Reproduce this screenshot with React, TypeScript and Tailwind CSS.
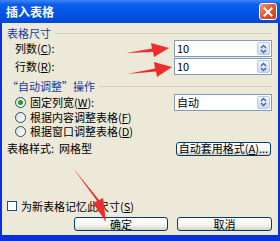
import React from "react";

const font = { fontFamily: '"Noto Sans CJK SC", "Liberation Sans", sans-serif' };

function Spinner() {
  return (
    <div className="flex h-[13px] w-[13px] flex-col items-center justify-center rounded-[2px] border border-[#B8CBEF] bg-[linear-gradient(180deg,#F0F5FF_0%,#C6D8FA_100%)]">
      <svg width="7" height="10" viewBox="0 0 7 10">
        <path d="M1 4 L3.5 1.5 L6 4" fill="none" stroke="#4D6185" strokeWidth="1.3" />
        <path d="M1 6 L3.5 8.5 L6 6" fill="none" stroke="#4D6185" strokeWidth="1.3" />
      </svg>
    </div>
  );
}

function Field({ value }: { value: string }) {
  return (
    <div className="flex h-[17px] w-[98px] items-center justify-between border border-[#7F9DB9] bg-white pl-[2px] pr-[1px]">
      <span className="block text-[11px] leading-[11px] text-black">{value}</span>
      <Spinner />
    </div>
  );
}

function Radio({ checked }: { checked?: boolean }) {
  return (
    <div className="flex h-[11px] w-[11px] items-center justify-center rounded-full border border-[#1C5180] bg-[linear-gradient(135deg,#DCDCD7_0%,#FFFFFF_100%)]">
      {checked && <div className="h-[5px] w-[5px] rounded-full bg-[#21A121]" />}
    </div>
  );
}

function XPButton({ children, className }: { children: React.ReactNode; className?: string }) {
  return (
    <div
      className={
        "flex items-center justify-center rounded-[3px] border border-[#003C74] bg-[linear-gradient(180deg,#FFFFFF_0%,#F4F4F0_60%,#D6D0C5_100%)] text-[11px] leading-[11px] text-black " +
        (className ?? "")
      }
    >
      <span className="block leading-[11px]">{children}</span>
    </div>
  );
}

function Label({ children, className }: { children: React.ReactNode; className?: string }) {
  return <span className={"block leading-[11px] " + (className ?? "")}>{children}</span>;
}

export default function App() {
  return (
    <div className="relative h-[241px] w-[280px] overflow-hidden bg-[#0831D9]" style={font}>
      {/* Title bar */}
      <div className="flex h-[23px] items-center justify-between bg-[linear-gradient(180deg,#3D86F2_0%,#0A5CEC_20%,#0055E5_60%,#0049D2_100%)] pl-[6px] pr-[3px]">
        <span className="block text-[12px] font-bold leading-[12px] text-white">插入表格</span>
        <div className="flex h-[17px] w-[18px] items-center justify-center rounded-[3px] border border-white bg-[linear-gradient(135deg,#F0967A_0%,#E2582F_50%,#C8401A_100%)]">
          <svg width="10" height="10" viewBox="0 0 10 10">
            <path d="M1.5 1.5 L8.5 8.5 M8.5 1.5 L1.5 8.5" stroke="white" strokeWidth="2" strokeLinecap="square" />
          </svg>
        </div>
      </div>

      {/* Body */}
      <div className="mx-[2px] mb-[5px] flex h-[212px] flex-col bg-[#ECE9D8] pl-[5px] pr-[6px] text-[11px] leading-[11px] text-black">
        {/* Group header 1 */}
        <div className="mt-[3px] flex h-[14px] items-center gap-[4px]">
          <Label className="text-[#1A3C9E]">表格尺寸</Label>
          <div className="h-px flex-1 bg-[#D0D0BF]" />
        </div>
        <div className="flex h-[17px] items-center justify-between pl-[8px]">
          <Label>
            列数(<u>C</u>):
          </Label>
          <Field value="10" />
        </div>
        <div className="mt-[1px] flex h-[17px] items-center justify-between pl-[8px]">
          <Label>
            行数(<u>R</u>):
          </Label>
          <Field value="10" />
        </div>

        {/* Group header 2 */}
        <div className="mt-[4px] flex h-[14px] items-center gap-[4px]">
          <Label className="text-[#1A3C9E]">“自动调整”操作</Label>
          <div className="h-px flex-1 bg-[#D0D0BF]" />
        </div>
        <div className="mt-[1px] flex h-[16px] items-center justify-between pl-[8px]">
          <div className="flex items-center gap-[4px]">
            <Radio checked />
            <Label>
              固定列宽(<u>W</u>):
            </Label>
          </div>
          <Field value="自动" />
        </div>
        <div className="flex h-[14px] items-center gap-[4px] pl-[8px]">
          <Radio />
          <Label>
            根据内容调整表格(<u>F</u>)
          </Label>
        </div>
        <div className="flex h-[14px] items-center gap-[4px] pl-[8px]">
          <Radio />
          <Label>
            根据窗口调整表格(<u>D</u>)
          </Label>
        </div>

        <div className="mt-[3px] flex h-[15px] items-center justify-between">
          <Label>表格样式:&nbsp;&nbsp;网格型</Label>
          <XPButton className="mr-[1px] h-[14px] w-[95px]">
            自动套用格式(<u>A</u>)...
          </XPButton>
        </div>

        <div className="mt-[44px] flex h-[12px] items-center gap-[4px]">
          <div className="h-[10px] w-[10px] border border-[#1C5180] bg-white" />
          <Label>
            为新表格记忆此尺寸(<u>S</u>)
          </Label>
        </div>

        <div className="mt-[5px] flex h-[14px] items-center justify-end gap-[9px]">
          <XPButton className="h-[14px] w-[94px]">确定</XPButton>
          <XPButton className="h-[14px] w-[95px]">取消</XPButton>
        </div>
      </div>

      {/* Red annotation arrows */}
      <svg className="pointer-events-none absolute left-0 top-0" width="280" height="241" viewBox="0 0 280 241">
        <polygon points="126,53 152,48.5 151,43 169,48 154,57 153,52" fill="#EE2E2E" />
        <polygon points="127,74 155,68.5 154,62 172,67 157,77 156,71.5" fill="#EE2E2E" />
        <polygon points="73,168 97,201 93,203 106,222 103,198 99,200" fill="#EE2E2E" />
      </svg>
    </div>
  );
}
